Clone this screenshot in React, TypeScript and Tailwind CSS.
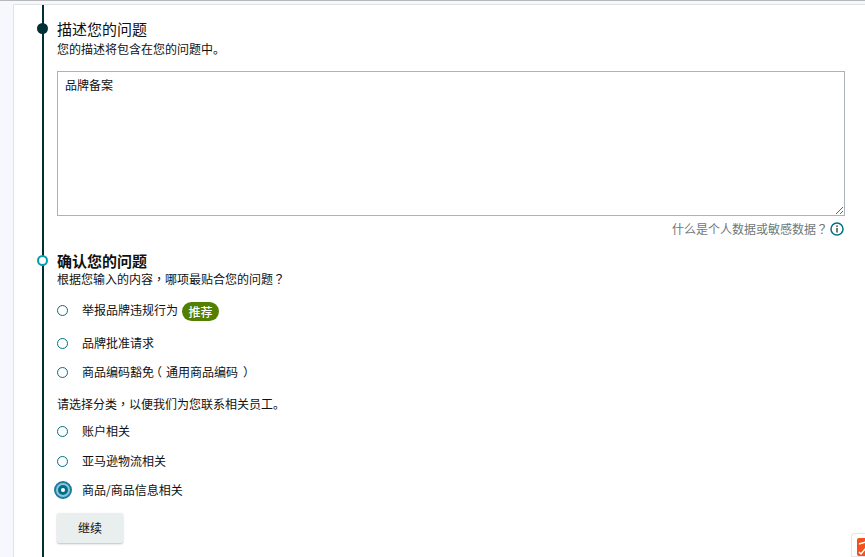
import React from 'react';

const font = { fontFamily: '"Noto Sans CJK SC", sans-serif' };
const tc = { fontFamily: '"Noto Sans CJK TC", sans-serif' };

function Radio({ label, checked, badge, className }: { label: React.ReactNode; checked?: boolean; badge?: boolean; className?: string }) {
  return (
    <div className={"flex items-center h-[18px] " + (className ?? '')}>
      <span className="w-[11px] flex justify-center shrink-0">
        {checked ? (
          <span className="w-[18px] h-[18px] shrink-0 rounded-full bg-[#8fc3df] border-[2px] border-[#1a7f9c] flex items-center justify-center">
            <span className="w-[10px] h-[10px] rounded-full bg-[#007185] flex items-center justify-center">
              <span className="w-[4px] h-[4px] rounded-full bg-white" />
            </span>
          </span>
        ) : (
          <span className="w-[11px] h-[11px] shrink-0 rounded-full border border-[#007185] bg-white" />
        )}
      </span>
      <span className="ml-[14px] text-[12px] leading-[18px] text-[#0f1111]">{label}</span>
      {badge && (
        <span className="ml-[4px] mt-[3px] h-[19px] w-[37px] rounded-full bg-[#538000] text-white text-[12px] leading-[19px] text-center font-medium">推荐</span>
      )}
    </div>
  );
}

export default function App() {
  return (
    <div className="h-[557px] w-[865px] overflow-hidden bg-[#f5f9fe] border-t border-[#b8b8b8] relative" style={font}>
      <div className="mt-[3px] ml-[13px] h-[560px] bg-white border-l border-t border-[#dde3e8] pl-[27px]">
        <div className="border-l-2 border-[#002f36] ml-[1px] h-full pl-[13px] pt-[14px] relative">
          <span className="absolute left-[-7px] top-[18px] w-[11px] h-[11px] rounded-full bg-[#002f36]" />
          <h2 className="text-[15px] leading-[20px] text-[#0f1111] font-normal">描述您的问题</h2>
          <p className="mt-[1px] text-[12px] leading-[18px] text-[#0f1111]">您的描述将包含在您的问题中。</p>

          <textarea
            defaultValue="品牌备案"
            className="block mt-[13px] w-[788px] h-[145px] border border-[#adb1b8] px-[7px] py-[4px] text-[12px] leading-[18px] text-[#0f1111] outline-none"
            style={font}
          />
          <div className="w-[788px] h-[26px] flex items-center justify-end gap-[2px] text-[12px] text-[#6f7878]">
            <span>什么是个人数据或敏感数据<span style={tc}>？</span></span>
            <svg width="14" height="14" viewBox="0 0 14 14" className="mr-[1px]">
              <circle cx="7" cy="7" r="6" fill="none" stroke="#007185" strokeWidth="1.5" />
              <rect x="6.2" y="6" width="1.6" height="4.5" fill="#555" />
              <rect x="6.2" y="3.4" width="1.6" height="1.6" fill="#555" />
            </svg>
          </div>

          <span className="absolute left-[-7px] top-[250px] w-[11px] h-[11px] rounded-full bg-white border-[2px] border-[#00a0b0]" />
          <h2 className="mt-[9px] text-[15px] leading-[19px] font-bold text-[#0f1111]">确认您的问题</h2>
          <p className="text-[12px] leading-[18px] text-[#0f1111]">根据您输入的内容<span style={tc}>，</span>哪项最贴合您的问题<span style={tc}>？</span></p>

          <Radio className="mt-[13px]" label="举报品牌违规行为" badge />
          <Radio className="mt-[15px]" label="品牌批准请求" />
          <Radio className="mt-[11px]" label={<>商品编码豁免<span className="inline-block -translate-x-[4px]">（</span>通用商品编码<span className="inline-block translate-x-[5px]">）</span></>} />

          <p className="mt-[14px] text-[12px] leading-[18px] text-[#0f1111]">请选择分类<span style={tc}>，</span>以便我们为您联系相关员工。</p>

          <Radio className="mt-[9px]" label="账户相关" />
          <Radio className="mt-[12px]" label="亚马逊物流相关" />
          <Radio className="mt-[11px]" label="商品/商品信息相关" checked />

          <button className="block mt-[14px] w-[66px] h-[30px] rounded-[2px] bg-[#e9eeee] shadow-[0_1px_2px_rgba(0,0,0,0.25)] text-[12px] text-[#0f1111]" style={font}>继续</button>
        </div>
      </div>
      <div className="absolute right-0 top-[532px] w-[14px] h-[24px] bg-white border border-r-0 border-[#e5e5e5] rounded-tl-[4px] pl-[5px] pt-[4px]">
        <svg width="9" height="18" viewBox="0 0 9 18" className="block">
          <rect width="12" height="18" rx="2" fill="#f4511e" />
          <path d="M2 6 L9 4 M2 14 L4 16 L9 10" stroke="#fff" strokeWidth="1.5" fill="none" />
        </svg>
      </div>
    </div>
  );
}
